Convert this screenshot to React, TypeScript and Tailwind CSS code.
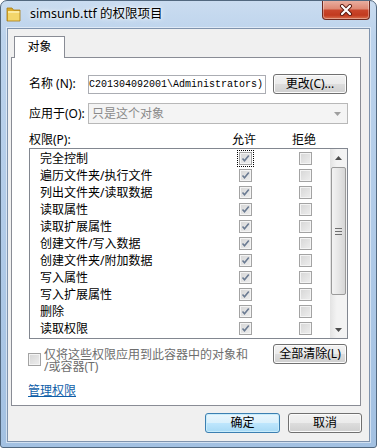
import type { ReactNode } from 'react'

const perms = [
  '完全控制',
  '遍历文件夹/执行文件',
  '列出文件夹/读取数据',
  '读取属性',
  '读取扩展属性',
  '创建文件/写入数据',
  '创建文件夹/附加数据',
  '写入属性',
  '写入扩展属性',
  '删除',
  '读取权限',
]

function FolderIcon() {
  return (
    <svg width="16" height="18" viewBox="0 0 16 18">
      <path d="M1 3h5l1.5 2H14v11H1z" fill="#d9a92a" />
      <path d="M2 6h12v10H2z" fill="#f3d66b" />
      <path d="M2 6h12v2H2z" fill="#fbeaa1" />
      <path d="M1 3h5l1.5 2H14v11H1z" fill="none" stroke="#a87b12" strokeWidth="0.8" />
    </svg>
  )
}

function CloseButton() {
  return (
    <div className="-mt-px flex h-[20px] w-[48px] items-center justify-center rounded-b-[4px] border border-t-0 border-[#6e2a20] bg-[linear-gradient(180deg,#eab2a4_0%,#df8a75_45%,#c9452b_55%,#c23a1f_80%,#d9714f_100%)] shadow-[inset_0_0_0_1px_rgba(255,255,255,0.35)]">
      <svg width="14" height="12" viewBox="0 0 14 12">
        <path d="M3 2l8 8M11 2l-8 8" stroke="#5a1a10" strokeWidth="4" strokeLinecap="round" />
        <path d="M3 2l8 8M11 2l-8 8" stroke="#ffffff" strokeWidth="2.2" strokeLinecap="round" />
      </svg>
    </div>
  )
}

function WinButton({ children, primary, className }: { children: ReactNode; primary?: boolean; className?: string }) {
  return (
    <div
      className={
        'flex h-[20px] items-center justify-center rounded-[3px] border text-[12px] leading-none text-black ' +
        (primary
          ? 'border-[#3c7fb1] bg-[linear-gradient(180deg,#eaf6fd_0%,#d9f0fc_50%,#bee6fd_51%,#a7d9f5_100%)] shadow-[inset_0_0_0_1px_#c8ecfb] '
          : 'border-[#707070] bg-[linear-gradient(180deg,#f2f2f2_0%,#ebebeb_50%,#dddddd_51%,#cfcfcf_100%)] shadow-[inset_0_0_0_1px_#fbfbfb] ') +
        (className ?? '')
      }
    >
      {children}
    </div>
  )
}

function CheckBox({ checked, focused }: { checked?: boolean; focused?: boolean }) {
  return (
    <span
      className={
        'flex size-[13px] items-center justify-center border border-[#a3a3a3] bg-[#f4f4f4] ' +
        (focused ? 'outline outline-1 outline-offset-[1px] outline-dotted outline-black' : '')
      }
    >
      <span className="relative flex size-[9px] items-center justify-center bg-[linear-gradient(135deg,#d8d8d8_0%,#ececec_100%)]">
        {checked && (
          <svg width="9" height="9" viewBox="0 0 9 9" className="absolute left-0 top-0">
            <path d="M1.5 4.5l2 2.2L7.8 1.6" fill="none" stroke="#6b7b92" strokeWidth="1.6" />
          </svg>
        )}
      </span>
    </span>
  )
}

function ArrowUp() {
  return (
    <svg width="7" height="4" viewBox="0 0 7 4">
      <path d="M0 4L3.5 0L7 4z" fill="#4d4d4d" />
    </svg>
  )
}

function ArrowDown() {
  return (
    <svg width="7" height="4" viewBox="0 0 7 4">
      <path d="M0 0L3.5 4L7 0z" fill="#4d4d4d" />
    </svg>
  )
}

function ScrollBar() {
  return (
    <div className="flex w-[17px] flex-col bg-[linear-gradient(90deg,#e3e3e3_0%,#f3f3f3_40%,#f3f3f3_100%)]">
      <div className="flex h-[17px] items-center justify-center">
        <ArrowUp />
      </div>
      <div className="mx-[1px] mt-[1px] flex h-[128px] flex-col items-center justify-center gap-[2px] rounded-[2px] border border-[#9a9a9a] bg-[linear-gradient(90deg,#f3f3f3_0%,#e6e6e6_50%,#d6d6d6_100%)]">
        <span className="h-px w-[7px] bg-[#6f6f6f]" />
        <span className="h-px w-[7px] bg-[#6f6f6f]" />
        <span className="h-px w-[7px] bg-[#6f6f6f]" />
      </div>
      <div className="flex-1" />
      <div className="flex h-[17px] items-center justify-center">
        <ArrowDown />
      </div>
    </div>
  )
}

export default function App() {
  return (
    <div className="flex h-[448px] w-[377px] flex-col overflow-hidden rounded-t-[7px] rounded-b-[3px] border border-[#52687f] bg-[linear-gradient(180deg,#cadcf0_0%,#bcd3ec_8%,#b1cbe8_50%,#a3c1e2_100%)] font-['Noto_Sans','Noto_Sans_CJK_SC',sans-serif] text-black">
      {/* title bar */}
      <div className="flex h-[27px] items-start">
        <div className="ml-[5px] mt-[4px]">
          <FolderIcon />
        </div>
        <div className="ml-[8px] mt-[5px] text-[12.5px] leading-[16px] text-black [text-shadow:0_0_6px_#ffffff,0_0_3px_#ffffff]">
          simsunb.ttf 的权限项目
        </div>
        <div className="ml-auto mr-[6px]">
          <CloseButton />
        </div>
      </div>

      {/* client */}
      <div className="mx-[6px] flex h-[414px] flex-col border border-[#7f93ad] bg-[#f0f0f0] shadow-[0_0_0_1px_rgba(255,255,255,0.5)]">
        <div className="ml-[6px] mt-[7px] flex">
          <div className="relative z-10 -mb-px flex h-[22px] w-[51px] items-start justify-center border border-b-0 border-[#898c95] bg-white pt-[2px] text-[12px] leading-[16px]">
            对象
          </div>
        </div>

        {/* tab panel */}
        <div className="ml-[3px] flex h-[349px] w-[350px] flex-col border border-[#898c95] bg-white pl-[17px] pr-[12px] text-[12px]">
          <div className="mt-[16px] flex h-[20px] items-center">
            <span className="w-[59px] leading-[14px]">名称 (N):</span>
            <div className="flex h-[19px] w-[178px] items-center justify-end overflow-hidden whitespace-nowrap border border-[#abadb3] pr-[2px] font-['Liberation_Mono',monospace] text-[10px]">
              C201304092001\Administrators)
            </div>
            <WinButton className="ml-[7px] mr-[1px] w-[74px]">更改(C)...</WinButton>
          </div>

          <div className="mt-[9px] flex h-[21px] items-center">
            <span className="w-[59px] leading-[14px]">应用于(O):</span>
            <div className="flex h-[21px] flex-1 items-center border border-[#b8b8b8] bg-[#f4f4f4] pl-[3px] text-[#8a8a8a]">
              <span className="flex-1 leading-[14px]">只是这个对象</span>
              <span className="mr-[6px] flex items-center opacity-50">
                <ArrowDown />
              </span>
            </div>
          </div>

          <div className="mt-[7px] flex h-[17px] items-center leading-[14px]">
            <span className="w-[203px]">权限(P):</span>
            <span className="w-[24px]">允许</span>
            <span className="w-[36px]" />
            <span>拒绝</span>
          </div>

          <div className="flex h-[191px] border border-[#828790]">
            <div className="flex flex-1 flex-col pt-[1px]">
              {perms.map((p, i) => (
                <div key={p} className="flex h-[17px] items-center">
                  <span className="w-[209px] pl-[10px] leading-[14px]">{p}</span>
                  <CheckBox checked focused={i === 0} />
                  <span className="w-[47px]" />
                  <CheckBox />
                </div>
              ))}
            </div>
            <ScrollBar />
          </div>

          <div className="mt-[5px] flex items-start">
            <div className="-ml-px mt-[5px] flex items-start">
              <span className="mt-[4px]">
                <CheckBox />
              </span>
              <div className="ml-[3px] flex w-[210px] flex-col text-[12px] leading-[12px] text-[#6d6d6d]">
                <span>仅将这些权限应用到此容器中的对象和</span>
                <span>/或容器(T)</span>
              </div>
            </div>
            <WinButton className="ml-auto mr-[1px] w-[74px]">全部清除(L)</WinButton>
          </div>

          <div className="-ml-px mt-[11px] text-[12px] leading-[14px]">
            <span className="text-[#0f5ea8] underline">管理权限</span>
          </div>
        </div>

        <div className="mr-[7px] mt-[7px] flex justify-end gap-[8px]">
          <WinButton primary className="w-[75px]">
            确定
          </WinButton>
          <WinButton className="w-[74px]">取消</WinButton>
        </div>
      </div>
    </div>
  )
}
